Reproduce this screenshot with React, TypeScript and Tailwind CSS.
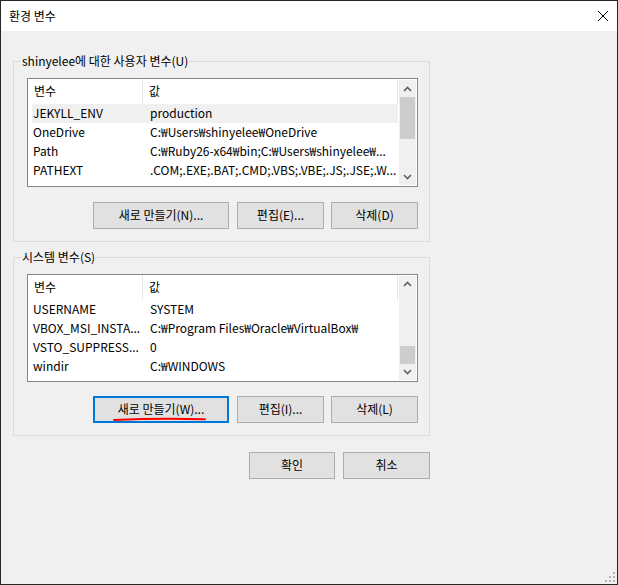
import React from "react";

type Row = { name: string; value: string; selected?: boolean };

const userRows: Row[] = [
  { name: "JEKYLL_ENV", value: "production", selected: true },
  { name: "OneDrive", value: "C:₩Users₩shinyelee₩OneDrive" },
  { name: "Path", value: "C:₩Ruby26-x64₩bin;C:₩Users₩shinyelee₩..." },
  { name: "PATHEXT", value: ".COM;.EXE;.BAT;.CMD;.VBS;.VBE;.JS;.JSE;.W..." },
];

const sysRows: Row[] = [
  { name: "USERNAME", value: "SYSTEM" },
  { name: "VBOX_MSI_INSTA...", value: "C:₩Program Files₩Oracle₩VirtualBox₩" },
  { name: "VSTO_SUPPRESS...", value: "0" },
  { name: "windir", value: "C:₩WINDOWS" },
];

function Chevron({ up }: { up: boolean }) {
  return (
    <svg width="9" height="6" viewBox="0 0 9 6">
      <polyline
        points={up ? "1,5 4.5,1.5 8,5" : "1,1 4.5,4.5 8,1"}
        fill="none"
        stroke="#606060"
        strokeWidth="1.6"
      />
    </svg>
  );
}

function ScrollBar({ thumbTop, thumbHeight }: { thumbTop: number; thumbHeight: number }) {
  return (
    <div className="w-[17px] bg-[#f0f0f0] flex flex-col">
      <div className="h-[17px] flex items-center justify-center">
        <Chevron up />
      </div>
      <div className="flex-1 flex flex-col">
        <div className="mx-[1px] bg-[#cdcdcd]" style={{ marginTop: thumbTop, height: thumbHeight }} />
      </div>
      <div className="h-[17px] flex items-center justify-center">
        <Chevron up={false} />
      </div>
    </div>
  );
}

function ListView({
  rows,
  height,
  thumbTop,
  thumbHeight,
}: {
  rows: Row[];
  height: number;
  thumbTop: number;
  thumbHeight: number;
}) {
  return (
    <div className="border border-[#828790] bg-white flex" style={{ height }}>
      <div className="flex-1 flex flex-col overflow-hidden">
        <div className="h-[25px] flex shrink-0 border-r border-[#e5e5e5]">
          <div className="w-[115px] pl-[6px] flex items-center pb-[2px] border-r border-[#e5e5e5]">변수</div>
          <div className="flex-1 pl-[6px] flex items-center pb-[2px]">값</div>
        </div>
        <div className="flex flex-col pl-[4px]">
          {rows.map((r) => (
            <div
              key={r.name}
              className={
                "h-[19px] flex items-center pb-[1px] whitespace-nowrap " + (r.selected ? "bg-[#f0f0f0]" : "")
              }
            >
              <div className="w-[116px] pl-[1px] overflow-hidden">{r.name}</div>
              <div className="flex-1 pl-[2px] overflow-hidden">{r.value}</div>
            </div>
          ))}
        </div>
      </div>
      <div className="p-[1px] flex">
        <ScrollBar thumbTop={thumbTop} thumbHeight={thumbHeight} />
      </div>
    </div>
  );
}

function Button({
  children,
  width,
  focused,
  className = "",
}: {
  children: React.ReactNode;
  width: number;
  focused?: boolean;
  className?: string;
}) {
  return (
    <div
      className={
        "relative h-[27px] bg-[#e1e1e1] flex items-center justify-center pb-[1px] whitespace-nowrap " +
        (focused ? "border-2 border-[#0078d7] " : "border border-[#adadad] ") +
        className
      }
      style={{ width }}
    >
      {children}
    </div>
  );
}

function GroupBox({
  label,
  children,
  className = "",
}: {
  label: string;
  children: React.ReactNode;
  className?: string;
}) {
  return (
    <div className={"relative w-[417px] border border-[#dcdcdc] pt-[16px] pl-[13px] pr-[11px] pb-[12px] " + className}>
      <div className="absolute left-[7px] top-[-9px] bg-[#f0f0f0] px-[1px] leading-[16px] whitespace-nowrap">
        {label}
      </div>
      {children}
    </div>
  );
}

export default function App() {
  return (
    <div className="w-[618px] h-[585px] border border-[#262626] bg-[#f0f0f0] flex flex-col relative overflow-hidden text-[12px] text-black font-['Noto_Sans_CJK_KR',sans-serif]">
      <div className="h-[30px] bg-white flex items-center justify-between pl-[8px] pr-[9px] shrink-0">
        <span className="text-[12px]">환경 변수</span>
        <svg width="10" height="10" viewBox="0 0 10 10">
          <line x1="0" y1="0" x2="10" y2="10" stroke="#000" strokeWidth="1" />
          <line x1="10" y1="0" x2="0" y2="10" stroke="#000" strokeWidth="1" />
        </svg>
      </div>

      <div className="flex flex-col pl-[12px] pt-[30px]">
        <GroupBox label="shinyelee에 대한 사용자 변수(U)">
          <ListView rows={userRows} height={109} thumbTop={0} thumbHeight={42} />
          <div className="flex justify-end mt-[15px]">
            <Button width={136}>새로 만들기(N)...</Button>
            <Button width={87} className="ml-[8px]">편집(E)...</Button>
            <Button width={87} className="ml-[7px]">삭제(D)</Button>
          </div>
        </GroupBox>

        <GroupBox label="시스템 변수(S)" className="mt-[15px]">
          <ListView rows={sysRows} height={108} thumbTop={53} thumbHeight={18} />
          <div className="flex justify-end mt-[14px]">
            <Button width={136} focused>
              새로 만들기(W)...
              <svg className="absolute left-[18px] top-[19px]" width="93" height="5" viewBox="0 0 93 5">
                <path d="M1 3 Q 46 0.8 92 2.2" fill="none" stroke="#ff0000" strokeWidth="2" strokeLinecap="round" />
              </svg>
            </Button>
            <Button width={87} className="ml-[8px]">편집(I)...</Button>
            <Button width={87} className="ml-[7px]">삭제(L)</Button>
          </div>
        </GroupBox>

        <div className="w-[417px] flex justify-end mt-[16px]">
          <Button width={86}>확인</Button>
          <Button width={87} className="ml-[8px]">취소</Button>
        </div>
      </div>

      <svg className="absolute right-[2px] bottom-[2px]" width="10" height="10" viewBox="0 0 10 10">
        <rect x="8" y="0" width="2" height="2" fill="#b4b4b4" />
        <rect x="4" y="4" width="2" height="2" fill="#b4b4b4" />
        <rect x="8" y="4" width="2" height="2" fill="#b4b4b4" />
        <rect x="0" y="8" width="2" height="2" fill="#b4b4b4" />
        <rect x="4" y="8" width="2" height="2" fill="#b4b4b4" />
        <rect x="8" y="8" width="2" height="2" fill="#b4b4b4" />
      </svg>
    </div>
  );
}
